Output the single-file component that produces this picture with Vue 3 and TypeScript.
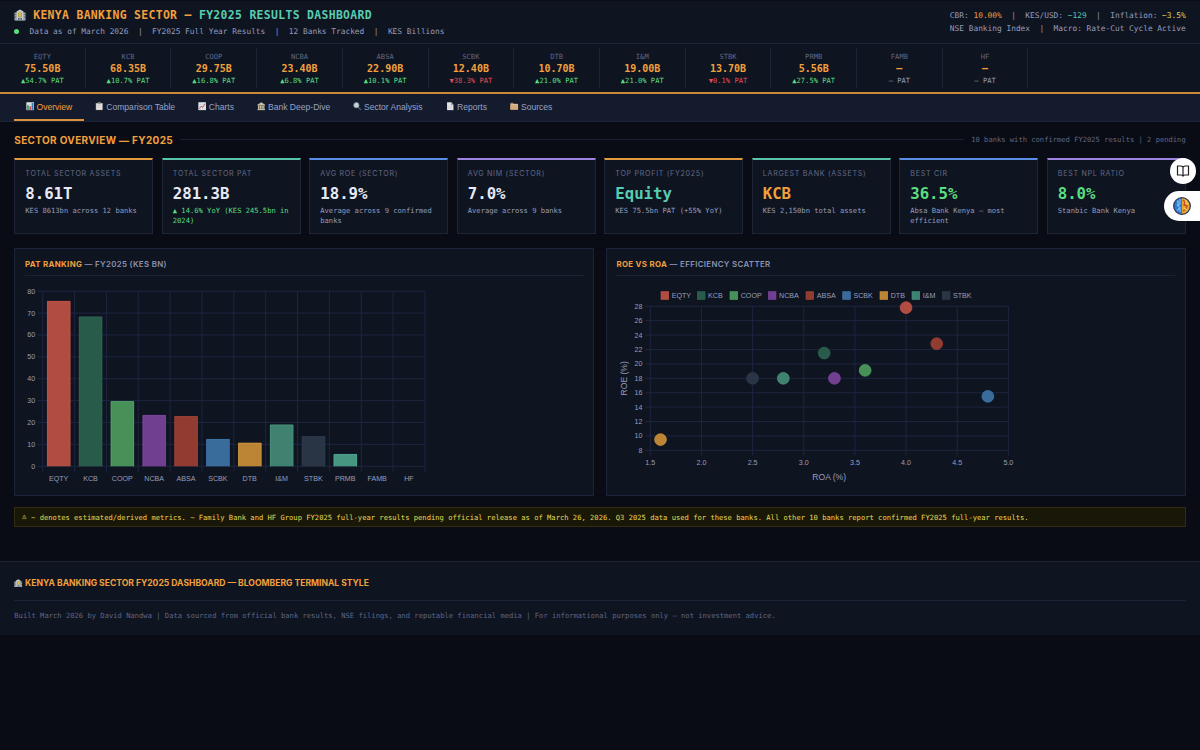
<script setup lang="ts">
interface Ticker { code: string; value: string; change: string; tone: 'up' | 'down' | 'flat' }
interface Kpi { label: string; value: string; sub: string; accent: string; tone: string; subTone?: string }
interface Bank { code: string; pat: number; color: string; edge: string; roa?: number; roe?: number }

const tickers: Ticker[] = [
  { code: 'EQTY', value: '75.50B', change: '▲54.7%', tone: 'up' },
  { code: 'KCB', value: '68.35B', change: '▲10.7%', tone: 'up' },
  { code: 'COOP', value: '29.75B', change: '▲16.8%', tone: 'up' },
  { code: 'NCBA', value: '23.40B', change: '▲6.8%', tone: 'up' },
  { code: 'ABSA', value: '22.90B', change: '▲10.1%', tone: 'up' },
  { code: 'SCBK', value: '12.40B', change: '▼38.3%', tone: 'down' },
  { code: 'DTB', value: '10.70B', change: '▲21.0%', tone: 'up' },
  { code: 'I&M', value: '19.00B', change: '▲21.0%', tone: 'up' },
  { code: 'STBK', value: '13.70B', change: '▼0.1%', tone: 'down' },
  { code: 'PRMB', value: '5.56B', change: '▲27.5%', tone: 'up' },
  { code: 'FAMB', value: '—', change: '—', tone: 'flat' },
  { code: 'HF', value: '—', change: '—', tone: 'flat' },
]

const tabs = [
  { icon: 'bars', label: 'Overview', width: 69.8 },
  { icon: 'clip', label: 'Comparison Table', width: 102.5 },
  { icon: 'trend', label: 'Charts', width: 59.2 },
  { icon: 'temple', label: 'Bank Deep-Dive', width: 96 },
  { icon: 'lens', label: 'Sector Analysis', width: 93 },
  { icon: 'page', label: 'Reports', width: 64 },
  { icon: 'folder', label: 'Sources', width: 65 },
]

const kpis: Kpi[] = [
  { label: 'TOTAL SECTOR ASSETS', value: '8.61T', sub: 'KES 8613bn across 12 banks', accent: 'orange', tone: 'plain' },
  { label: 'TOTAL SECTOR PAT', value: '281.3B', sub: '▲ 14.6% YoY (KES 245.5bn in 2024)', accent: 'teal', tone: 'plain', subTone: 'up' },
  { label: 'AVG ROE (SECTOR)', value: '18.9%', sub: 'Average across 9 confirmed banks', accent: 'blue', tone: 'plain' },
  { label: 'AVG NIM (SECTOR)', value: '7.0%', sub: 'Average across 9 banks', accent: 'purple', tone: 'plain' },
  { label: 'TOP PROFIT (FY2025)', value: 'Equity', sub: 'KES 75.5bn PAT (+55% YoY)', accent: 'orange', tone: 'teal-text' },
  { label: 'LARGEST BANK (ASSETS)', value: 'KCB', sub: 'KES 2,150bn total assets', accent: 'teal', tone: 'orange-text' },
  { label: 'BEST CIR', value: '36.5%', sub: 'Absa Bank Kenya — most efficient', accent: 'blue', tone: 'up' },
  { label: 'BEST NPL RATIO', value: '8.0%', sub: 'Stanbic Bank Kenya', accent: 'purple', tone: 'up' },
]

const banks: Bank[] = [
  { code: 'EQTY', pat: 75.5, color: '#b14c41', edge: '#c9574a', roa: 4.0, roe: 27.8 },
  { code: 'KCB', pat: 68.35, color: '#285b4a', edge: '#2b6b55', roa: 3.2, roe: 21.5 },
  { code: 'COOP', pat: 29.75, color: '#479159', edge: '#51a967', roa: 3.6, roe: 19.1 },
  { code: 'NCBA', pat: 23.4, color: '#713f90', edge: '#8249a5', roa: 3.3, roe: 18.0 },
  { code: 'ABSA', pat: 22.9, color: '#923b31', edge: '#a94438', roa: 4.3, roe: 22.8 },
  { code: 'SCBK', pat: 12.4, color: '#396b9b', edge: '#417cb5', roa: 4.8, roe: 15.5 },
  { code: 'DTB', pat: 10.7, color: '#bc8535', edge: '#d6993d', roa: 1.6, roe: 9.5 },
  { code: 'I&M', pat: 19, color: '#408270', edge: '#4a9882', roa: 2.8, roe: 18.0 },
  { code: 'STBK', pat: 13.7, color: '#293544', edge: '#2e3e50', roa: 2.5, roe: 18.0 },
  { code: 'PRMB', pat: 5.56, color: '#469681', edge: '#50ad95' },
  { code: 'FAMB', pat: 0, color: '#000', edge: '#000' },
  { code: 'HF', pat: 0, color: '#000', edge: '#000' },
]

// Bar chart geometry
const barLeft = 17.7
const barStep = 31.85
const barBase = 186.3
const barTop = 11.2
const barY = (v: number) => barBase - (v / 80) * (barBase - barTop)
const barTicks = [0, 10, 20, 30, 40, 50, 60, 70, 80]

// Scatter geometry
const sx = (v: number) => 34.3 + (v - 1.5) * 102.3
const sy = (v: number) => 170.4 - (v - 8) * 7.21
const xTicks = [1.5, 2, 2.5, 3, 3.5, 4, 4.5, 5]
const yTicks = [8, 10, 12, 14, 16, 18, 20, 22, 24, 26, 28]
const points = banks.filter((b) => b.roa !== undefined)
const legendX = [45, 81.3, 114, 152.3, 190, 226.7, 264, 296, 326.3]
</script>

<template>
  <div class="page">
    <svg class="defs" width="0" height="0" aria-hidden="true">
      <symbol id="bank" viewBox="0 0 24 24">
        <path d="M5 5 12 1l7 4v18H5z" fill="#c5cbd0" />
        <path d="M1 7h5v16H1zM18 7h5v16h-5z" fill="#9da7b0" />
        <path d="M8 8q4-5 8 0v8H8z" fill="#b59c3c" />
        <path d="M11 7h2v8h-2z" fill="#f1df7b" />
        <path d="M2 10h2v2H2zm0 5h2v2H2zm18-5h2v2h-2zm0 5h2v2h-2zM8 18h2v5H8zm6 0h2v5h-2z" fill="#536473" />
        <path d="M10.500 17h3v6h-3z" fill="#6f7c86" />
      </symbol>
      <symbol id="bars" viewBox="0 0 24 24">
        <path d="M1 1h22v22H1z" fill="#dfe6ea" />
        <path d="M1 7h22M1 13h22M1 18h22" stroke="#aab9c4" />
        <path d="M3 9h5v14H3z" fill="#3f9a66" />
        <path d="M9.500 12h5v11h-5z" fill="#bd5660" />
        <path d="M16 3h5v20h-5z" fill="#3478b9" />
      </symbol>
      <symbol id="clip" viewBox="0 0 24 24">
        <path d="M2 3h20v20H2z" fill="#99806a" />
        <path d="M3.500 4h17v18h-17z" fill="#e5e6e8" />
        <path d="M8 1h8v5H8z" fill="#8d949c" />
        <path d="M6 10h12M6 13h12M6 16h12" stroke="#b4b9bf" />
      </symbol>
      <symbol id="trend" viewBox="0 0 24 24">
        <path d="M1 1h22v22H1z" fill="#e6eaec" />
        <path d="M1 7h22M1 13h22M1 19h22M7 1v22M14 1v22" stroke="#b4c0c8" />
        <path d="m3 19 6-7 4 3 8-11" fill="none" stroke="#c04b58" stroke-width="2.500" />
      </symbol>
      <symbol id="temple" viewBox="0 0 24 24">
        <path d="M1 8 12 1l11 7v2H1zM2 19h20l1 4H1z" fill="#cabd9f" />
        <path d="M4 10h16v9H4z" fill="#665d50" />
        <path d="M3 10h3v9H3zm5 0h3v9H8zm5 0h3v9h-3zm5 0h3v9h-3z" fill="#d6ceb8" />
      </symbol>
      <symbol id="lens" viewBox="0 0 24 24">
        <path d="m14 14 8 8" stroke="#555c67" stroke-width="4" stroke-linecap="round" />
        <circle cx="9.500" cy="9" r="7.500" fill="#c4d0d8" stroke="#818c96" stroke-width="2" />
      </symbol>
      <symbol id="page" viewBox="0 0 24 24">
        <path d="M3 1h12l6 7v15H3z" fill="#e4e5e7" />
        <path d="M14 1v8h7z" fill="#9aa1a9" />
        <path d="M6 12h12M6 15h12M6 18h12" stroke="#bcc0c5" />
      </symbol>
      <symbol id="folder" viewBox="0 0 24 24">
        <path d="M1 4q0-2 2-2h6l2 3h10q2 0 2 2v14H1z" fill="#a98661" />
        <path d="M2 6h20v4H2z" fill="#e5ddcf" />
        <path d="M1 8h22v14H1z" fill="#d4ad7c" />
      </symbol>
    </svg>

    <header class="top">
      <div>
        <h1><svg class="logo"><use href="#bank" /></svg><span>KENYA BANKING SECTOR — <b>FY2025 RESULTS DASHBOARD</b></span></h1>
        <p class="status"><i class="dot"></i><span>Data as of March 2026&nbsp; |&nbsp; FY2025 Full Year Results&nbsp; |&nbsp; 12 Banks Tracked&nbsp; |&nbsp; KES Billions</span></p>
      </div>
      <div class="macro">
        <div>CBR: <b class="orange-text">10.00%</b>&nbsp; |&nbsp; KES/USD: <b class="teal-text">~129</b>&nbsp; |&nbsp; Inflation: <b class="yellow-text">~3.5%</b></div>
        <div>NSE Banking Index&nbsp; |&nbsp; Macro: Rate-Cut Cycle Active</div>
      </div>
    </header>

    <section class="strip">
      <div v-for="t in tickers" :key="t.code" class="tick">
        <span class="code">{{ t.code }}</span>
        <span class="val">{{ t.value }}</span>
        <span class="chg" :class="t.tone">{{ t.change }} PAT</span>
      </div>
    </section>

    <nav class="tabs">
      <a v-for="(t, i) in tabs" :key="t.label" class="tab" :class="{ active: i === 0 }" :style="{ width: t.width + 'px' }">
        <svg class="emoji"><use :href="'#' + t.icon" /></svg><span>{{ t.label }}</span>
      </a>
    </nav>

    <main>
      <div class="section-head">
        <h2>SECTOR OVERVIEW — FY2025</h2>
        <hr>
        <span>10 banks with confirmed FY2025 results | 2 pending</span>
      </div>

      <div class="kpis">
        <article v-for="k in kpis" :key="k.label" class="kpi" :class="k.accent">
          <h3>{{ k.label }}</h3>
          <strong :class="k.tone">{{ k.value }}</strong>
          <p :class="k.subTone">{{ k.sub }}</p>
        </article>
      </div>

      <div class="panels">
        <section class="panel">
          <h4><b>PAT RANKING</b> — FY2025 (KES BN)</h4>
          <svg class="chart" width="558" height="210">
            <g class="grid">
              <path v-for="v in barTicks" :key="'h' + v" :d="`M${barLeft - 5} ${barY(v)}H${barLeft + barStep * 12}`" />
              <path v-for="n in 13" :key="'v' + n" :d="`M${barLeft + (n - 1) * barStep} ${barTop}V${barBase + 5.500}`" />
            </g>
            <text v-for="v in barTicks" :key="'t' + v" x="10.200" :y="barY(v) + 2.500" text-anchor="end">{{ v }}</text>
            <g v-for="(b, i) in banks" :key="b.code">
              <rect v-if="b.pat" :x="barLeft + i * barStep + 4.400" :y="barY(b.pat)" width="23.200" :height="barBase - barY(b.pat)" :fill="b.color" />
              <path v-if="b.pat" class="edge" :stroke="b.edge" :d="`M${barLeft + i * barStep + 4.700} ${barBase}V${barY(b.pat) + 0.300}h22.600V${barBase}`" />
              <text :x="barLeft + (i + 0.5) * barStep" y="200.800" text-anchor="middle">{{ b.code }}</text>
            </g>
          </svg>
        </section>

        <section class="panel">
          <h4><b>ROE VS ROA</b> — EFFICIENCY SCATTER</h4>
          <svg class="chart" width="558" height="210">
            <g class="grid">
              <path v-for="v in yTicks" :key="'h' + v" :d="`M${sx(1.5) - 5} ${sy(v)}H${sx(5)}`" />
              <path v-for="v in xTicks" :key="'v' + v" :d="`M${sx(v)} ${sy(28)}V${sy(8) + 5}`" />
            </g>
            <text v-for="v in yTicks" :key="'y' + v" x="26.400" :y="sy(v) + 2.500" text-anchor="end">{{ v }}</text>
            <text v-for="v in xTicks" :key="'x' + v" :x="sx(v)" y="185.200" text-anchor="middle">{{ v.toFixed(1) }}</text>
            <text class="axis" :x="213.200" y="199.800" text-anchor="middle">ROA (%)</text>
            <text class="axis" transform="translate(11 98.300) rotate(-90)" text-anchor="middle">ROE (%)</text>
            <g v-for="(b, i) in points" :key="b.code">
              <rect :x="legendX[i]" y="11.700" width="7.700" height="7.700" :fill="b.color" :stroke="b.edge" stroke-width="0.600" />
              <text :x="legendX[i] + 10.700" y="18.100">{{ b.code }}</text>
              <circle :cx="sx(b.roa!)" :cy="sy(b.roe!)" r="5.900" :fill="b.color" :stroke="b.edge" stroke-width="0.700" />
            </g>
          </svg>
        </section>
      </div>

      <p class="note"><svg class="warn" viewBox="0 0 10 10"><path d="M5 1 9.300 9H.7zM5 3.500v3M5 7.300v.9" /></svg><span>~ denotes estimated/derived metrics. ~ Family Bank and HF Group FY2025 full-year results pending official release as of March 26, 2026. Q3 2025 data used for these banks. All other 10 banks report confirmed FY2025 full-year results.</span></p>
    </main>

    <footer>
      <h5><svg class="emoji"><use href="#bank" /></svg><span>KENYA BANKING SECTOR FY2025 DASHBOARD — BLOOMBERG TERMINAL STYLE</span></h5>
      <p>Built March 2026 by David Nandwa | Data sourced from official bank results, NSE filings, and reputable financial media | For informational purposes only — not investment advice.</p>
    </footer>

    <div class="book">
      <svg width="14" height="14" viewBox="0 0 14 14"><path d="M7 3Q6 2 4.500 2H1.500v9H5q1.400 0 2 1 .6-1 2-1h3.500V2h-3Q8 2 7 3zV12" /></svg>
    </div>
    <div class="assist">
      <svg width="20" height="20" viewBox="0 0 20 20">
        <circle cx="10" cy="10" r="8.300" fill="#3479cf" />
        <path d="M10 1.700a8.300 8.300 0 0 1 0 16.600z" fill="#e8a82f" />
        <path d="M5 4.500q2 1 1 3t1 3-2 4M8 3v5l-3 2M8 11v5" fill="none" stroke="#78b9f1" stroke-width="1.200" />
        <path d="M11 4l2 2-1 3 3 1-1 3-3 2" fill="none" stroke="#c74d2b" stroke-width="1.400" />
        <path d="M14 4v3l2 1M12 12l3 2" fill="none" stroke="#f6d45b" stroke-width="1.200" />
        <circle cx="10" cy="10" r="8.300" fill="none" stroke="#29395c" stroke-width="1.300" />
      </svg>
    </div>
  </div>
</template>

<style>
body { margin: 0; background: #0a0c15; }
</style>

<style scoped>
* { box-sizing: border-box; }
.page { position: relative; width: 1200px; height: 750px; overflow: hidden; background: #0a0c15; color: #959dba; font-family: "DejaVu Sans Mono", monospace; font-size: 7.14px; }
.defs { position: absolute; }
h1, h2, h3, h4, h5, p { margin: 0; }
.up { color: #5ade80; }
.down { color: #e04c55; }
.orange-text { color: #f2a03c; }
.teal-text { color: #55cbae; }
.yellow-text { color: #e9d44e; }

.top { height: 44px; padding: 7px 14.300px 0; display: flex; justify-content: space-between; background: #0f1421; border-top: 1px solid #0a0d17; border-bottom: 1px solid #1e2436; }
h1 { display: flex; align-items: center; height: 14px; font-size: 11.430px; letter-spacing: .33px; color: #f2a03c; white-space: nowrap; }
h1 b { color: #58ccb0; }
.logo { width: 12px; height: 12px; margin-right: 6.900px; }
.status { display: flex; align-items: center; height: 12px; margin-top: 3px; font-size: 7.860px; letter-spacing: -.016px; }
.dot { width: 5px; height: 5px; margin: 0 10.200px 0 0; border-radius: 50%; background: #5ade80; }
.macro { font-size: 7.860px; letter-spacing: -.016px; line-height: 13px; padding-top: 1px; white-space: nowrap; }
.macro b { font-weight: 400; }

.strip { height: 50px; padding-top: 4px; display: flex; background: #0f1421; border-bottom: 2px solid #c98a37; }
.tick { width: 85.710px; height: 40px; border-right: 1px solid #1e2436; display: flex; flex-direction: column; align-items: center; }
.code { line-height: 10px; margin-top: 4px; color: #5f6783; }
.val { line-height: 14px; font-size: 10px; font-weight: 700; color: #f2a03c; }
.chg { line-height: 9px; margin-top: .3px; }

.tabs { height: 28px; padding-left: 14.300px; display: flex; background: #141b2d; border-bottom: 1px solid #1c2336; font-family: "Liberation Sans", Arial, sans-serif; font-size: 8.570px; }
.tab { display: flex; align-items: center; padding: 0 0 0 11.400px; height: 27px; color: #98a1c6; white-space: nowrap; border-bottom: 2px solid transparent; }
.tab.active { color: #f2a03c; border-bottom: 2px solid #d9913a; }
.emoji { width: 8.500px; height: 8.500px; margin-right: 2.300px; flex: none; }

main { padding: 10.500px 14.300px 0; height: 439px; }
.section-head { display: flex; align-items: center; height: 14px; color: #5f6783; }
h2 { font: 700 10px Inter, sans-serif; letter-spacing: .34px; color: #f2a03c; white-space: nowrap; }
hr { flex: 1; height: 1px; margin: 0 7px; border: 0; background: #1c2234; }
.kpis { display: grid; grid-template-columns: repeat(8, 1fr); gap: 8.570px; margin-top: 11px; }
.kpi { height: 76.500px; padding: 9.500px 9px 0 10px; background: #0f1421; border: 1px solid #1e2537; border-top: 2px solid; }
.orange { border-top-color: #e39a3c; }
.teal { border-top-color: #58c4a8; }
.blue { border-top-color: #5a8ee6; }
.purple { border-top-color: #9c84e0; }
.kpi h3 { font: 400 7.140px/10px Inter, sans-serif; letter-spacing: .71px; color: #636b87; white-space: nowrap; }
.kpi strong { display: block; margin-top: 5px; font-size: 15.710px; line-height: 20px; letter-spacing: -.03px; color: #e6eaf6; }
.kpi strong.up { color: #5ade80; }
.kpi strong.orange-text { color: #f2a03c; }
.kpi strong.teal-text { color: #58ccb0; }
.kpi p { margin-top: 1.500px; line-height: 10px; }

.panels { display: grid; grid-template-columns: 1fr 1fr; gap: 11.430px; margin-top: 14px; }
.panel { height: 247.500px; padding: 9px 9.700px; background: #0f1421; border: 1px solid #1c2439; }
.panel h4 { height: 18px; padding-top: 1px; border-bottom: 1px solid #1c2336; font: 600 7.860px/11px Inter, sans-serif; letter-spacing: .34px; color: #8b93b0; }
.panel h4 b { font-weight: 700; color: #f2a03c; }
.chart { display: block; margin-top: 3.500px; font: 7.140px "Liberation Sans", Arial, sans-serif; }
.chart text { fill: #979fbd; }
.chart .axis { font-size: 8.570px; }
.grid path { stroke: #1e2540; stroke-width: 1; fill: none; }
.edge { fill: none; stroke-width: .7; }

.note { display: flex; align-items: center; height: 20px; margin-top: 11.500px; padding-left: 7.200px; background: #191708; border: 1px solid #332c10; color: #ead955; white-space: nowrap; letter-spacing: .01px; }
.warn { width: 4.600px; height: 5.500px; margin-right: 4px; fill: none; stroke: #e0ce4f; stroke-width: 1; }

footer { height: 74px; padding: 14.500px 14.300px 0; background: #0f1421; border-top: 1px solid #1e2436; }
h5 { display: flex; align-items: center; height: 24.500px; padding-bottom: 11px; font: 700 8.570px Inter, sans-serif; color: #f2a03c; border-bottom: 1px solid #1c2336; }
footer p { margin-top: 8.500px; line-height: 11px; color: #5f6783; letter-spacing: .012px; }

.book { position: absolute; left: 1169.500px; top: 157.500px; width: 26px; height: 26px; border-radius: 50%; background: #fff; display: grid; place-items: center; }
.book path { fill: none; stroke: #202020; stroke-width: 1.200; }
.assist { position: absolute; left: 1164px; top: 190.700px; width: 36px; height: 30.500px; padding: 5px 0 0 8px; border-radius: 15.500px 0 0 15.500px; background: #fff; }
</style>
